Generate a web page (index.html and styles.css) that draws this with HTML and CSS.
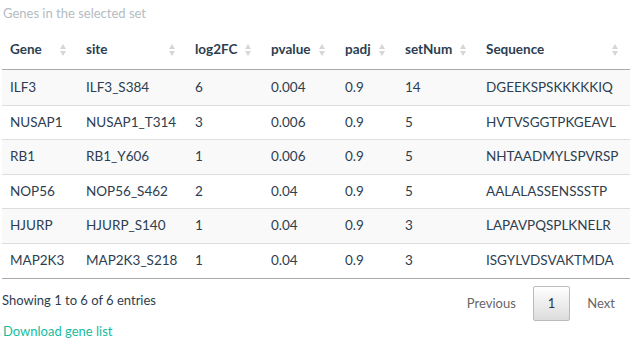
FILE: index.html
```html
<!DOCTYPE html>
<html lang="en">
<head>
  <meta charset="UTF-8" />
  <title>Genes in the selected set</title>
  <link rel="stylesheet" href="styles.css">
</head>
<body>
  <div class="gene-panel">
    <div class="caption">Genes in the selected set</div>

    <table class="gene-table">
      <colgroup>
        <col class="c-gene"><col class="c-site"><col class="c-fc"><col class="c-p">
        <col class="c-padj"><col class="c-set"><col class="c-seq">
      </colgroup>
      <thead>
        <tr>
          <th class="sortable">Gene</th>
          <th class="sortable">site</th>
          <th class="sortable">log2FC</th>
          <th class="sortable">pvalue</th>
          <th class="sortable">padj</th>
          <th class="sortable">setNum</th>
          <th class="sortable">Sequence</th>
        </tr>
      </thead>
      <tbody>
        <tr class="odd"><td>ILF3</td><td>ILF3_S384</td><td>6</td><td>0.004</td><td>0.9</td><td>14</td><td>DGEEKSPSKKKKKIQ</td></tr>
        <tr><td>NUSAP1</td><td>NUSAP1_T314</td><td>3</td><td>0.006</td><td>0.9</td><td>5</td><td>HVTVSGGTPKGEAVL</td></tr>
        <tr class="odd"><td>RB1</td><td>RB1_Y606</td><td>1</td><td>0.006</td><td>0.9</td><td>5</td><td>NHTAADMYLSPVRSP</td></tr>
        <tr><td>NOP56</td><td>NOP56_S462</td><td>2</td><td>0.04</td><td>0.9</td><td>5</td><td>AALALASSENSSSTP</td></tr>
        <tr class="odd"><td>HJURP</td><td>HJURP_S140</td><td>1</td><td>0.04</td><td>0.9</td><td>3</td><td>LAPAVPQSPLKNELR</td></tr>
        <tr><td>MAP2K3</td><td>MAP2K3_S218</td><td>1</td><td>0.04</td><td>0.9</td><td>3</td><td>ISGYLVDSVAKTMDA</td></tr>
      </tbody>
    </table>

    <div class="table-footer">
      <div class="info">Showing 1 to 6 of 6 entries</div>
      <div class="paging">
        <a class="page-btn disabled">Previous</a>
        <a class="page-btn current">1</a>
        <a class="page-btn disabled">Next</a>
      </div>
    </div>

    <a class="download" href="#">Download gene list</a>
  </div>
</body>
</html>
```

FILE: styles.css
```css
* {
  margin: 0;
  padding: 0;
  box-sizing: border-box;
}

body {
  font-family: 'Lato', 'Liberation Sans', sans-serif;
  font-size: 13px;
  line-height: 17px;
  color: #2c3e50;
  background: #fff;
}

.gene-panel {
  padding: 0 5px 0 2px;
}

.caption {
  color: #b4bcc2;
  padding: 5px 0 9px 1px;
}

.gene-table {
  width: 628px;
  border-collapse: collapse;
  table-layout: fixed;
  font-size: 13.5px;
}

.c-gene { width: 76px; }
.c-site { width: 109px; }
.c-fc { width: 76px; }
.c-p { width: 74px; }
.c-padj { width: 60px; }
.c-set { width: 81px; }
.c-seq { width: 152px; }

.gene-table th {
  text-align: left;
  font-weight: 700;
  line-height: 17px;
  padding: 10px 18px 11px 8px;
  border-bottom: 1px solid #a9a9a9;
  white-space: nowrap;
}

.sortable {
  background-image: url("data:image/svg+xml,%3Csvg xmlns='http://www.w3.org/2000/svg' width='8' height='14'%3E%3Cpath d='M4 1L7 6H1z' fill='%23d6d6d6'/%3E%3Cpath d='M4 13L7 8H1z' fill='%23d6d6d6'/%3E%3C/svg%3E");
  background-repeat: no-repeat;
  background-position: right 11px center;
}

.gene-table td {
  padding: 8px 8px;
  line-height: 17.6px;
  border-top: 1px solid #ddd;
  white-space: nowrap;
}

.gene-table tbody tr:first-child td {
  border-top: none;
  padding-top: 9px;
}

.gene-table tr.odd td {
  background: #f9f9f9;
}

.gene-table tbody {
  border-bottom: 1px solid #a9a9a9;
}

.table-footer {
  display: flex;
  justify-content: space-between;
  align-items: flex-start;
}

.info {
  padding-top: 13px;
}

.paging {
  display: flex;
  margin-top: 7px;
}

.page-btn {
  padding: 8px 14px;
  margin-left: 2px;
  border: 1px solid transparent;
  border-radius: 2px;
  color: #666;
}

.page-btn.current {
  color: #333;
  border-color: #bbb;
  background: linear-gradient(to bottom, #fff 0%, #dcdcdc 100%);
}

.download {
  display: block;
  margin-top: 2px;
  padding-left: 1px;
  color: #18bc9c;
  text-decoration: none;
}
```
